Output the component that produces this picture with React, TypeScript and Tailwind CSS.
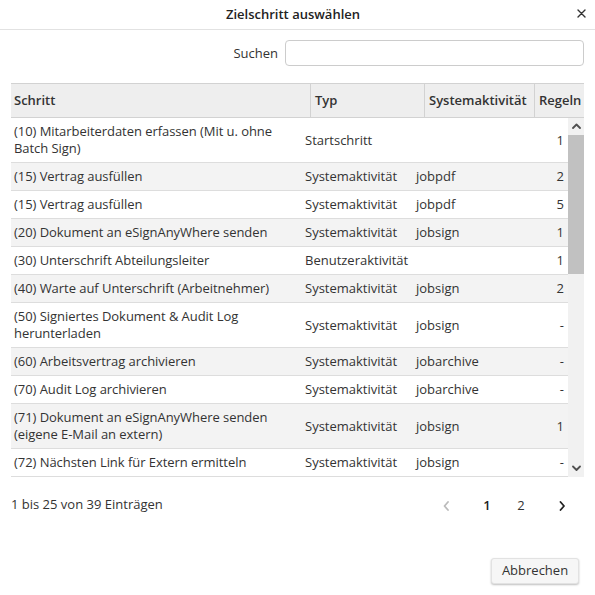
import React from 'react';

type Row = { step: string; type: string; activity: string; rules: string };

const rows: Row[] = [
  { step: '(10) Mitarbeiterdaten erfassen (Mit u. ohne Batch Sign)', type: 'Startschritt', activity: '', rules: '1' },
  { step: '(15) Vertrag ausfüllen', type: 'Systemaktivität', activity: 'jobpdf', rules: '2' },
  { step: '(15) Vertrag ausfüllen', type: 'Systemaktivität', activity: 'jobpdf', rules: '5' },
  { step: '(20) Dokument an eSignAnyWhere senden', type: 'Systemaktivität', activity: 'jobsign', rules: '1' },
  { step: '(30) Unterschrift Abteilungsleiter', type: 'Benutzeraktivität', activity: '', rules: '1' },
  { step: '(40) Warte auf Unterschrift (Arbeitnehmer)', type: 'Systemaktivität', activity: 'jobsign', rules: '2' },
  { step: '(50) Signiertes Dokument & Audit Log herunterladen', type: 'Systemaktivität', activity: 'jobsign', rules: '-' },
  { step: '(60) Arbeitsvertrag archivieren', type: 'Systemaktivität', activity: 'jobarchive', rules: '-' },
  { step: '(70) Audit Log archivieren', type: 'Systemaktivität', activity: 'jobarchive', rules: '-' },
  { step: '(71) Dokument an eSignAnyWhere senden (eigene E-Mail an extern)', type: 'Systemaktivität', activity: 'jobsign', rules: '1' },
  { step: '(72) Nächsten Link für Extern ermitteln', type: 'Systemaktivität', activity: 'jobsign', rules: '-' },
];

function Chevron({ dir, className }: { dir: 'up' | 'down' | 'left' | 'right'; className?: string }) {
  const d = {
    up: 'M1 5 L4.5 1.5 L8 5',
    down: 'M1 1.5 L4.5 5 L8 1.5',
    left: 'M5 1 L1.5 5 L5 9',
    right: 'M1.5 1 L5 5 L1.5 9',
  }[dir];
  const vertical = dir === 'up' || dir === 'down';
  return (
    <svg
      width={vertical ? 9 : 7}
      height={vertical ? 7 : 10}
      viewBox={vertical ? '0 0 9 7' : '0 0 7 10'}
      fill="none"
      className={className}
    >
      <path d={d} stroke="currentColor" strokeWidth="1.8" strokeLinecap="round" strokeLinejoin="round" />
    </svg>
  );
}

export default function App() {
  return (
    <div className="w-[595px] h-[595px] bg-white flex flex-col font-['Open_Sans',sans-serif] text-[13px] text-[#333]">
      {/* Title bar */}
      <div className="h-[30px] flex items-center border-b border-[#e2e2e2]">
        <div className="flex-1" />
        <div className="font-semibold text-[13px] text-[#222]">Zielschritt auswählen</div>
        <div className="flex-1 flex justify-end pr-[9px] -mt-[2px]">
          <svg width="9" height="9" viewBox="0 0 9 9" className="text-[#333]">
            <path d="M1 1 L8 8 M8 1 L1 8" stroke="currentColor" strokeWidth="1.4" strokeLinecap="round" />
          </svg>
        </div>
      </div>

      {/* Search */}
      <div className="flex justify-end items-center gap-[7px] pr-[11px] mt-[10px]">
        <label className="text-[13px] text-[#333] mt-[1px]">Suchen</label>
        <input className="w-[299px] h-[26px] rounded-[4px] border border-[#cccccc] outline-none px-2" />
      </div>

      {/* Table */}
      <div className="mx-[11px] mt-[17px]">
        <div className="flex h-[35px] bg-[#eeeeee] border-t border-b border-[#d2d2d2] font-semibold text-[13px] text-[#333]">
          <div className="w-[299px] pl-[3px] flex items-center">Schritt</div>
          <div className="w-[114px] pl-[4px] flex items-center border-l border-[#d2d2d2]">Typ</div>
          <div className="w-[110px] pl-[4px] flex items-center border-l border-[#d2d2d2]">Systemaktivität</div>
          <div className="flex-1 pl-[4px] flex items-center border-l border-[#d2d2d2]">Regeln</div>
        </div>
        <div className="flex h-[359px]">
          <div className="flex-1 overflow-hidden">
            {rows.map((r, i) => (
              <div
                key={i}
                className={`flex items-center border-b border-[#dddddd] py-[5px] leading-[17px] ${
                  i % 2 === 1 ? 'bg-[#f3f3f3]' : 'bg-white'
                }`}
              >
                <div className="w-[290px] pl-[3px] pr-[4px] tracking-[-0.05px]">{r.step}</div>
                <div className="w-[111px] px-[4px]">{r.type}</div>
                <div className="w-[107px] px-[4px]">{r.activity}</div>
                <div className="flex-1 px-[4px] text-right">{r.rules}</div>
              </div>
            ))}
          </div>
          {/* Scrollbar */}
          <div className="w-[16px] bg-[#f1f1f1] flex flex-col">
            <div className="h-[17px] flex items-center justify-center text-[#505050]">
              <Chevron dir="up" />
            </div>
            <div className="h-[139px] bg-[#c1c1c1]" />
            <div className="flex-1" />
            <div className="h-[17px] flex items-center justify-center text-[#505050]">
              <Chevron dir="down" />
            </div>
          </div>
        </div>
      </div>

      {/* Pagination */}
      <div className="flex items-center justify-between pl-[11px] pr-[16px] mt-[18px] h-[20px]">
        <div className="text-[13px] text-[#333]">1 bis 25 von 39 Einträgen</div>
        <div className="flex items-center mt-[2px]">
          <div className="w-[34px] flex justify-center text-[#bbbbbb]">
            <Chevron dir="left" />
          </div>
          <div className="w-[34px] ml-[7px] text-center font-semibold text-[#222]">1</div>
          <div className="w-[34px] text-center text-[#333]">2</div>
          <div className="w-[34px] ml-[7px] flex justify-center text-[#222]">
            <Chevron dir="right" />
          </div>
        </div>
      </div>

      {/* Footer */}
      <div className="mt-auto flex justify-end pr-[16px] pb-[11px]">
        <button className="w-[88px] h-[26px] rounded-[3px] bg-[#f6f6f6] border border-[#e2e2e2] shadow-[0_1px_2px_rgba(0,0,0,0.25)] text-[13px] text-[#333]">
          Abbrechen
        </button>
      </div>
    </div>
  );
}
